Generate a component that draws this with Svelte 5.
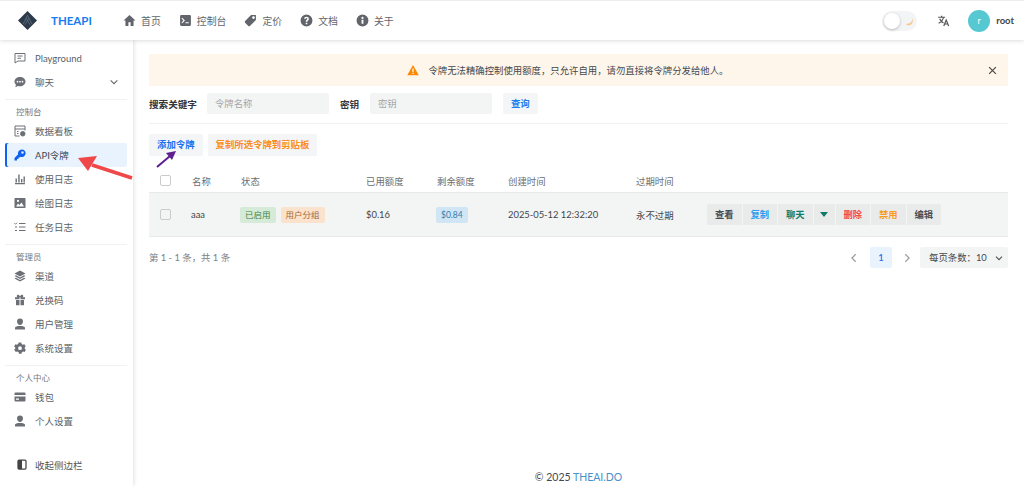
<script>
  const nav = [
    { t: '首页', i: 'home' }, { t: '控制台', i: 'term' }, { t: '定价', i: 'tag' }, { t: '文档', i: 'help' }, { t: '关于', i: 'info' }
  ];
  const groups = [
    { items: [{ t: 'Playground', i: 'edit' }, { t: '聊天', i: 'chat', chev: true }] },
    { label: '控制台', items: [{ t: '数据看板', i: 'dash' }, { t: 'API令牌', i: 'key', active: true }, { t: '使用日志', i: 'hist' }, { t: '绘图日志', i: 'img' }, { t: '任务日志', i: 'list' }] },
    { label: '管理员', items: [{ t: '渠道', i: 'layers' }, { t: '兑换码', i: 'gift' }, { t: '用户管理', i: 'user' }, { t: '系统设置', i: 'gear' }] },
    { label: '个人中心', items: [{ t: '钱包', i: 'card' }, { t: '个人设置', i: 'user' }] }
  ];
  const paths = {
    home: 'M12 2 1 12h3.500v10h5.500v-7h4v7h5.500V12H23z',
    term: 'M4 2h16a2 2 0 0 1 2 2v16a2 2 0 0 1-2 2H4a2 2 0 0 1-2-2V4a2 2 0 0 1 2-2zm2 5-1.400 1.400L8.200 12l-3.600 3.600L6 17l5-5zm6 8v2h6v-2z',
    tag: 'M22 2h-9L2 13a2.200 2.200 0 0 0 0 3l6 6a2.200 2.200 0 0 0 3 0l11-11zm-4.500 7a2.500 2.500 0 1 1 0-5 2.500 2.500 0 0 1 0 5z',
    help: 'M12 1a11 11 0 1 0 0 22 11 11 0 0 0 0-22zm1.500 18h-3v-3h3zm2-7.600c-1 1-2 1.500-2 3.100h-3c0-2.800 1.500-3.600 2.500-4.600.9-.9.300-2.400-1-2.400-1.100 0-1.900.8-1.900 1.900H7.600a4.400 4.400 0 0 1 8.800 0c0 .8-.3 1.500-.9 2z',
    info: 'M12 1a11 11 0 1 0 0 22 11 11 0 0 0 0-22zm1.700 17h-3.400v-7.500h3.400zM12 9.300a2 2 0 1 1 0-4 2 2 0 0 1 0 4z',
    chat: 'M12 2C6 2 1 6 1 11.200c0 2.500 1.100 4.700 3 6.300L2.500 22.500l5.400-2.400c1.300.4 2.700.6 4.100.6 6 0 11-4.200 11-9.500S18 2 12 2zM7 13a1.700 1.700 0 1 1 0-3.400A1.700 1.700 0 0 1 7 13zm5 0a1.700 1.700 0 1 1 0-3.400 1.700 1.700 0 0 1 0 3.400zm5 0a1.700 1.700 0 1 1 0-3.400 1.700 1.700 0 0 1 0 3.400z',
    key: 'M15.500 1a7.500 7.500 0 0 0-7.200 9.600L1 18v5h5v-3h3v-3h2.500l1.600-1.500A7.500 7.500 0 1 0 15.500 1zm1.500 8.500a2.500 2.500 0 1 1 0-5 2.500 2.500 0 0 1 0 5z',
    hist: 'M2 20h20v2.500H2zM3 11h2.800v8H3zM8.500 3h2.800v16H8.500zM14 12h2.800v7H14zM19 7h2.800v12H19z',
    img: 'M2.500 2h19A1.500 1.500 0 0 1 23 3.500v17a1.500 1.500 0 0 1-1.500 1.500h-19A1.500 1.500 0 0 1 1 20.500v-17A1.500 1.500 0 0 1 2.500 2zM4 19h16l-5-8-4 5-3-3zM8 10a2.200 2.200 0 1 0 0-4.400A2.200 2.200 0 0 0 8 10z',
    layers: 'M12 1 1 7l11 6 11-6zM4 10.400 1 12l11 6 11-6-3-1.600-8 4.400zM4 15.400 1 17l11 6 11-6-3-1.600-8 4.400z',
    gift: 'M11 22.500H5a1 1 0 0 1-1-1V12h7zm2 0V12h7v9.500a1 1 0 0 1-1 1zM2 6.500h4.500a3.200 3.200 0 0 1 .5-5c1.800-.8 3.800.7 5 3 1.200-2.300 3.200-3.800 5-3a3.200 3.200 0 0 1 .5 5H22v4H13v-4h-2v4H2z',
    user: 'M12 1a6 6 0 0 1 6 6c0 3.500-2.700 7-6 7s-6-3.500-6-7a6 6 0 0 1 6-6zM2 19.500C2 17 6.500 16 12 16s10 1 10 3.500V23H2z',
    gear: 'M9.500 1h5l.8 3.200 2.300 1.300 3.200-.9 2.500 4.300L21.500 11v2.600l2.300 2.100-2.500 4.300-3.200-.9-2.300 1.300-.8 3.200h-5l-.8-3.200-2.300-1.300-3.200.9L.200 15.700l2.300-2.100V11L.200 8.900l2.500-4.300 3.200.9 2.300-1.300zM12 8.500a3.800 3.800 0 1 0 0 7.600 3.800 3.800 0 0 0 0-7.600z',
    card: 'M3 3h18a2 2 0 0 1 2 2v3H1V5a2 2 0 0 1 2-2zM1 11h22v8a2 2 0 0 1-2 2H3a2 2 0 0 1-2-2zm3 4v2.500h6V15z'
  };
</script>

{#snippet icon(name, size = 12)}
  {#if name === 'edit'}
    <svg width={size} height={size} viewBox="0 0 24 24" fill="none" stroke="currentColor" stroke-width="2"><path d="M2 3h20v15H8l-6 4zM7 8h10M7 12.500h7" /></svg>
  {:else if name === 'dash'}
    <svg width={size} height={size} viewBox="0 0 24 24" fill="none" stroke="currentColor" stroke-width="2"><path d="M11 22H2V2h20v9M2 8h20M6 13h3M6 17h3" /><circle cx="17.500" cy="17.500" r="4.500" fill="currentColor" /></svg>
  {:else if name === 'list'}
    <svg width={size} height={size} viewBox="0 0 24 24" fill="none" stroke="currentColor" stroke-width="2"><path d="M10 5h13M10 12h13M10 19h13M1 4.500l2 2 3-3M2 12h4M2 19h4" /></svg>
  {:else}
    <svg width={size} height={size} viewBox="0 0 24 24" fill="currentColor"><path d={paths[name]} /></svg>
  {/if}
{/snippet}

<div class="page">
  <header class="top">
    <div class="brand">
      <svg class="logo" width="19" height="19" viewBox="1 1 22 22"><path d="M12 1 23 12 12 23 1 12z" fill="#2d3a4a" /><path d="M7 16 12 6l5 10M10 9l5 8M14 9l-5 8" stroke="#6b7a8c" stroke-width="0.800" fill="none" /></svg>
      <span class="brand-name">THEAPI</span>
    </div>
    <nav class="nav">
      {#each nav as n}
        <span class="nav-item">{@render icon(n.i, 13)}<span>{n.t}</span></span>
      {/each}
    </nav>
    <div class="top-right">
      <div class="toggle">
        <span class="knob"></span>
        <svg class="moon" width="10" height="10" viewBox="0 0 24 24"><path d="M20 4c1 8-4 15-16 15 3 3 7 4 10 3 6-2 9-10 6-18z" fill="#f6c78c" /></svg>
      </div>
      <svg class="lang" width="13" height="13" viewBox="0 0 24 24" fill="none" stroke="#555" stroke-width="2.200"><path d="M2 6h13M8.500 3v3M12 6c-1 5-5 9-9 11M5 9c1.500 3 4 6 7 7.500M12.500 22l4.500-11 4.500 11M14 18.500h6" /></svg>
      <span class="avatar">r</span>
      <span class="uname">root</span>
    </div>
  </header>

  <div class="body">
    <aside class="side">
      <div class="side-scroll">
        {#each groups as g, gi}
          {#if gi > 0}<div class="side-div"></div>{/if}
          {#if g.label}<div class="side-label">{g.label}</div>{/if}
          {#each g.items as it}
            <div class="side-item" class:active={it.active}>
              <span class="side-icon">{@render icon(it.i, 12)}</span>
              <span class="side-text">{it.t}</span>
              {#if it.chev}
                <svg class="chev" width="10" height="10" viewBox="0 0 24 24" fill="none" stroke="#666" stroke-width="2.500"><path d="m4 8 8 8 8-8" /></svg>
              {/if}
            </div>
          {/each}
        {/each}
      </div>
      <div class="collapse">
        <svg width="10" height="11" viewBox="0 0 20 22"><rect x="2" y="2" width="16" height="18" rx="2" fill="none" stroke="#444" stroke-width="2.500" /><rect x="2" y="2" width="8" height="18" fill="#444" /></svg>
        <span>收起侧边栏</span>
      </div>
    </aside>

    <main class="main">
      <div class="content">
        <div class="alert">
          <svg width="12" height="12" viewBox="0 0 24 22"><path d="M12 1 23.500 21.500H.500z" fill="#fc8800" /><path d="M10.800 8h2.400v7h-2.400zM10.800 16.500h2.400v2.400h-2.400z" fill="#fff" /></svg>
          <span>令牌无法精确控制使用额度，只允许自用，请勿直接将令牌分发给他人。</span>
          <svg class="close" width="9" height="9" viewBox="0 0 24 24" fill="none" stroke="#444" stroke-width="3"><path d="m3 3 18 18M21 3 3 21" /></svg>
        </div>

        <div class="search">
          <span class="s-label">搜索关键字</span>
          <div class="input">令牌名称</div>
          <span class="s-label second">密钥</span>
          <div class="input">密钥</div>
          <div class="btn query">查询</div>
        </div>
        <div class="hr"></div>

        <div class="actions">
          <div class="btn blue">添加令牌</div>
          <div class="btn orange">复制所选令牌到剪贴板</div>
        </div>

        <div class="table">
          <div class="thead">
            <span class="cb"></span>
            <span>名称</span><span>状态</span><span>已用额度</span><span>剩余额度</span><span>创建时间</span><span>过期时间</span><span></span>
          </div>
          <div class="trow">
            <span class="cb"></span>
            <span class="name">aaa</span>
            <span class="tags"><span class="tag green">已启用</span><span class="tag peach">用户分组</span></span>
            <span>$0.16</span>
            <span><span class="tag sky">$0.84</span></span>
            <span>2025-05-12 12:32:20</span>
            <span>永不过期</span>
            <span class="ops">
              <span class="op dark">查看</span>
              <span class="op c-blue">复制</span>
              <span class="op c-teal">聊天</span>
              <span class="op caret"><svg width="8" height="5" viewBox="0 0 8 5"><path d="M0 0h8L4 5z" fill="#0b7a68" /></svg></span>
              <span class="op c-red">删除</span>
              <span class="op c-orange">禁用</span>
              <span class="op dark">编辑</span>
            </span>
          </div>
        </div>

        <div class="pager">
          <span class="count">第 1 - 1 条，共 1 条</span>
          <div class="pages">
            <svg width="10" height="10" viewBox="0 0 24 24" fill="none" stroke="#9a9ea3" stroke-width="3"><path d="m16 3-9 9 9 9" /></svg>
            <span class="page-num">1</span>
            <svg width="10" height="10" viewBox="0 0 24 24" fill="none" stroke="#9a9ea3" stroke-width="3"><path d="m8 3 9 9-9 9" /></svg>
            <div class="size"><span>每页条数：10</span>
              <svg width="8" height="8" viewBox="0 0 24 24" fill="none" stroke="#555" stroke-width="3.500"><path d="m3 8 9 9 9-9" /></svg>
            </div>
          </div>
        </div>
      </div>
      <footer class="foot">© 2025 <span class="link">THEAI.DO</span></footer>
    </main>
  </div>

  <svg class="annot" width="1024" height="486" viewBox="0 0 1024 486">
    <path d="M132 178 L92 165" stroke="#f04848" stroke-width="3.500" fill="none" />
    <path d="M78 158 L97 156 L88 171 Z" fill="#f04848" />
    <path d="M157 167 L170 156" stroke="#5c1f8f" stroke-width="2" fill="none" />
    <path d="M176 151 L166 153 L172 160 Z" fill="#5c1f8f" />
  </svg>
</div>

<style>
  :global(body) { margin: 0; background: #fff; }
  .page {
    position: relative;
    width: 1024px;
    height: 486px;
    overflow: hidden;
    display: flex;
    flex-direction: column;
    font-family: Lato, "Noto Sans CJK SC", sans-serif;
    font-size: 9.400px;
    color: #3a3d42;
    border-top: 1px solid #eee;
    box-sizing: border-box;
  }
  .top {
    height: 39px;
    flex: none;
    display: flex;
    align-items: center;
    background: #fff;
    box-shadow: 0 1px 4px rgba(0,0,0,.14);
    position: relative;
    z-index: 2;
  }
  .brand { display: flex; align-items: center; width: 123px; padding-left: 18px; box-sizing: border-box; }
  .brand-name { margin-left: 14px; color: #1a7cf0; font-weight: 700; font-size: 11.500px; }
  .nav { display: flex; gap: 18px; }
  .nav-item { display: flex; align-items: center; gap: 5px; color: #62666c; font-size: 9.900px; }
  .top-right { margin-left: auto; display: flex; align-items: center; padding-right: 10px; }
  .toggle {
    width: 35px; height: 20px; border-radius: 10px; background: #f3f4f5;
    display: flex; align-items: center; justify-content: space-between; box-sizing: border-box; padding: 0 3px 0 2px;
  }
  .knob { width: 16px; height: 16px; border-radius: 50%; background: #fff; box-shadow: 0 1px 3px rgba(0,0,0,.25); }
  .lang { margin-left: 20px; }
  .avatar {
    margin-left: 18px; width: 22px; height: 22px; border-radius: 50%; background: #55c8d2; color: #fff;
    display: flex; align-items: center; justify-content: center; font-size: 9px;
  }
  .uname { margin-left: 6px; font-size: 9.500px; color: #444; font-weight: 700; }

  .body { flex: 1; display: flex; min-height: 0; }
  .side {
    width: 133px; flex: none; background: #fff; box-shadow: 1px 0 4px rgba(0,0,0,.12);
    display: flex; flex-direction: column; position: relative; z-index: 1; box-sizing: border-box; padding: 6px 6px 0 5px;
    font-size: 9.500px;
  }
  .side-scroll { flex: 1; }
  .side-div { height: 1px; background: #f0f1f2; margin-top: 5px; }
  .side-label { font-size: 8.500px; color: #74787d; height: 14px; line-height: 14px; padding: 5px 0 0 11px; }
  .side-item {
    height: 24px; display: flex; align-items: center; padding-left: 9px; color: #5b5f65; border-radius: 2px;
  }
  .side-item.active { background: #e9f3fe; color: #41454b; box-shadow: inset 2px 0 0 #0f62f0; }
  .side-item.active .side-icon { color: #0f62f0; }
  .side-icon { width: 21px; display: flex; color: #6c7076; }
  .chev { margin-left: auto; margin-right: 8px; }
  .collapse { height: 40px; display: flex; align-items: center; gap: 8px; padding: 0 0 3px 12px; color: #555; box-sizing: border-box; }

  .main { flex: 1; min-width: 0; display: flex; flex-direction: column; background: #fff; }
  .content { flex: 1; padding: 14px 16px 0 16px; }
  .alert {
    height: 32px; background: #fef6ea; display: flex; align-items: center; justify-content: center; gap: 9px; position: relative; color: #45484d; padding-right: 21px; box-sizing: border-box;
  }
  .close { position: absolute; right: 11px; top: 12px; }
  .search { display: flex; align-items: center; margin-top: 7px; height: 21px; }
  .s-label { font-weight: 700; color: #33363a; font-size: 9.600px; }
  .s-label.second { margin-left: 11px; width: 20px; }
  .input {
    width: 122px; height: 21px; background: #f3f5f5; border-radius: 2px; margin-left: 10px; line-height: 21px; padding-left: 8px; box-sizing: border-box; color: #a4a7aa;
  }
  .btn { height: 21px; line-height: 21px; padding: 0 8px; background: #f4f5f6; border-radius: 2px; font-weight: 600; }
  .query { margin-left: 11px; color: #1a7cf0; }
  .hr { height: 1px; background: #f0f1f2; margin-top: 9px; }
  .actions { display: flex; gap: 5px; margin-top: 10px; }
  .actions .btn { height: 22px; line-height: 22px; }
  .blue { color: #1a70f0; }
  .orange { color: #f98d1e; }

  .thead, .trow { display: grid; grid-template-columns: 32px 49px 125px 71px 71px 128px 71px 1fr; align-items: center; padding-left: 11px; box-sizing: border-box; }
  .thead { height: 37px; padding-top: 13px; color: #6a6e73; border-bottom: 1px solid #e8e9ea; }
  .trow { height: 44px; background: #f3f4f4; border-bottom: 1px solid #e8e9ea; color: #43464b; }
  .thead .cb { background: #fff; }
  .cb { width: 11px; height: 11px; border: 1px solid #c9cbcd; border-radius: 2px; box-sizing: border-box; }
  .name { margin-left: -1px; }
  .tags { display: flex; gap: 5px; margin-left: -1px; }
  .tag { display: inline-block; height: 16px; line-height: 16px; padding: 0 5px; border-radius: 2px; font-size: 8.500px; }
  .green { background: #d5ebd7; color: #3f8246; }
  .peach { background: #fbe2cc; color: #a8672c; }
  .sky { background: #d0e6f5; color: #3b7aa8; margin-left: -1px; }
  .ops { display: flex; gap: 1px; }
  .op { width: 34.500px; height: 21px; line-height: 21px; text-align: center; background: #e9ebeb; font-weight: 600; font-size: 9.300px; flex: none; }
  .op:first-child { border-radius: 2px 0 0 2px; }
  .op:last-child { border-radius: 0 2px 2px 0; }
  .dark { color: #4a4d52; }
  .c-blue { color: #2a9cf0; }
  .c-teal { color: #0e7f6c; }
  .caret { width: 21px; display: flex; align-items: center; justify-content: center; }
  .c-red { color: #f34b3f; }
  .c-orange { color: #f99a1e; }

  .pager { display: flex; align-items: center; justify-content: space-between; margin-top: 10px; }
  .count { color: #7c8085; position: relative; top: -1px; }
  .pages { display: flex; align-items: center; height: 21px; }
  .page-num { width: 22px; height: 21px; line-height: 21px; text-align: center; background: #e9f3fe; color: #1a70f0; border-radius: 2px; margin: 0 10px 0 11px; font-weight: 600; }
  .size { margin-left: 8px; width: 88px; height: 21px; line-height: 21px; background: #f3f5f5; border-radius: 2px; padding: 0 5px 0 9px; box-sizing: border-box; color: #45484d; display: flex; align-items: center; justify-content: space-between; }
  .foot { height: 18px; line-height: 18px; text-align: center; color: #45484d; font-size: 10.500px; }
  .link { color: #4a90c8; }
  .annot { position: absolute; left: 0; top: -1px; pointer-events: none; z-index: 5; }
</style>
